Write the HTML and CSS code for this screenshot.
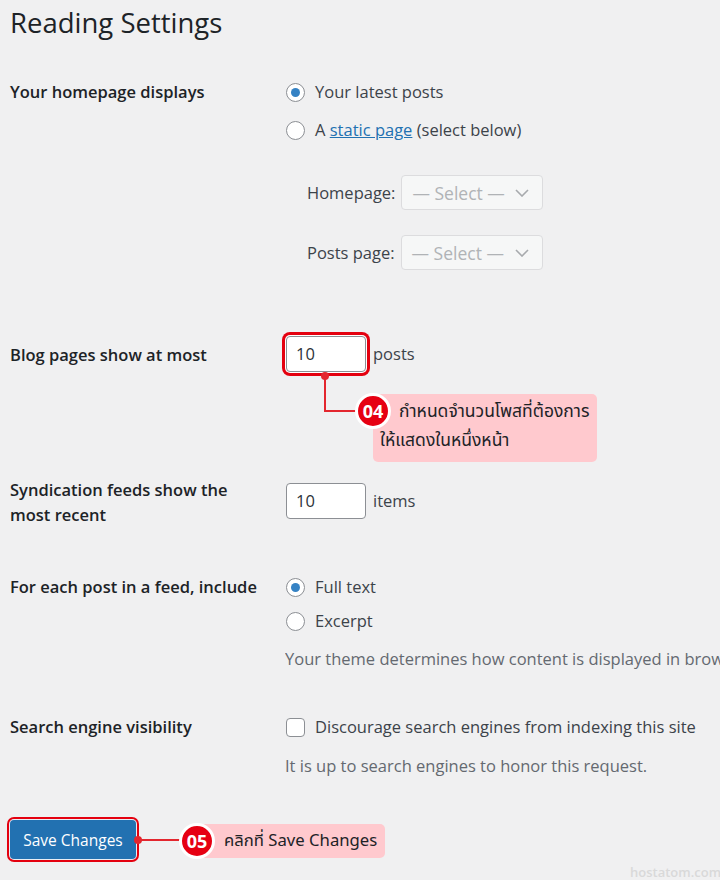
FILE: index.html
```html
<!DOCTYPE html>
<html lang="en">
<head>
<meta charset="utf-8">
<title>Reading Settings</title>
<link rel="stylesheet" href="styles.css">
</head>
<body>
<div class="page">
  <h1 class="title">Reading Settings</h1>

  <div class="row row-home">
    <div class="label">Your homepage displays</div>
    <div class="field">
      <div class="choice"><span class="radio checked"></span><span>Your latest posts</span></div>
      <div class="choice choice-2"><span class="radio"></span><span>A <a class="link" href="#">static page</a> (select below)</span></div>
      <div class="sub sub-1"><span>Homepage:</span><span class="select">— Select —<svg class="chev" viewBox="0 0 14 8" width="14" height="8"><path d="M1 1l6 6 6-6" fill="none" stroke="#a7aaad" stroke-width="1.6"/></svg></span></div>
      <div class="sub sub-2"><span>Posts page:</span><span class="select">— Select —<svg class="chev" viewBox="0 0 14 8" width="14" height="8"><path d="M1 1l6 6 6-6" fill="none" stroke="#a7aaad" stroke-width="1.6"/></svg></span></div>
    </div>
  </div>

  <div class="row row-blog">
    <div class="label label-pad">Blog pages show at most</div>
    <div class="field field-inline"><span class="num highlight">10</span><span class="unit">posts</span></div>
  </div>

  <div class="row row-feed">
    <div class="label label-two">Syndication feeds show the<br>most recent</div>
    <div class="field field-inline field-top"><span class="num">10</span><span class="unit">items</span></div>
  </div>

  <div class="row row-include">
    <div class="label">For each post in a feed, include</div>
    <div class="field field-clip">
      <div class="choice"><span class="radio checked"></span><span>Full text</span></div>
      <div class="choice choice-3"><span class="radio"></span><span>Excerpt</span></div>
      <p class="desc desc-1">Your theme determines how content is displayed in browsers.</p>
    </div>
  </div>

  <div class="row row-search">
    <div class="label">Search engine visibility</div>
    <div class="field">
      <div class="choice"><span class="checkbox"></span><span>Discourage search engines from indexing this site</span></div>
      <p class="desc desc-2">It is up to search engines to honor this request.</p>
    </div>
  </div>

  <div class="actions">
    <span class="button">Save Changes</span>
  </div>

  <!-- annotation 04 -->
  <span class="dot dot-04"></span>
  <span class="vline vline-04"></span>
  <span class="hline hline-04"></span>
  <div class="note note-04"><span class="note-line1">กำหนดจำนวนโพสที่ต้องการ</span><br>ให้แสดงในหนึ่งหน้า</div>
  <span class="badge badge-04">04</span>

  <!-- annotation 05 -->
  <span class="dot dot-05"></span>
  <span class="hline hline-05"></span>
  <div class="note note-05">คลิกที่ Save Changes</div>
  <span class="badge badge-05">05</span>

  <div class="watermark">hostatom.com</div>
</div>
</body>
</html>
```

FILE: styles.css
```css
html, body {
  margin: 0;
  padding: 0;
  background: #f0f0f1;
}
body {
  width: 720px;
  height: 880px;
  overflow: hidden;
  font-family: "Open Sans", "Noto Sans", sans-serif;
  font-size: 16.5px;
  color: #3c434a;
}
.page {
  position: relative;
  width: 720px;
  height: 880px;
  padding-left: 10px;
  box-sizing: border-box;
  overflow: hidden;
}
.title {
  margin: 0;
  padding-top: 5px;
  font-size: 27.5px;
  font-weight: 400;
  line-height: 36px;
  color: #1d2327;
}
.row {
  display: grid;
  grid-template-columns: 275px 1fr;
}
.row-home { margin-top: 39px; }
.row-blog { margin-top: 66px; }
.row-feed { margin-top: 105px; }
.row-include { margin-top: 48px; }
.row-search { margin-top: 44px; }

.label {
  font-weight: 600;
  color: #1d2327;
  line-height: 24px;
  font-size: 16.5px;
}
.label-pad { padding-top: 7px; }
.label-two { line-height: 25px; }

.field { line-height: 24px; min-width: 0; }
.field-clip { overflow: hidden; }
.choice {
  display: flex;
  align-items: center;
  gap: 10px;
  height: 24px;
  white-space: nowrap;
}
.choice-2 { margin-top: 14px; }
.choice-3 { margin-top: 10px; }
.radio {
  width: 17px;
  height: 17px;
  border: 1px solid #8c8f94;
  border-radius: 50%;
  background: #fff;
  margin-left: 1px;
  display: inline-flex;
  align-items: center;
  justify-content: center;
  flex: none;
}
.radio.checked::after {
  content: "";
  width: 9px;
  height: 9px;
  border-radius: 50%;
  background: #3582c4;
}
.checkbox {
  width: 17px;
  height: 17px;
  border: 1px solid #8c8f94;
  border-radius: 4px;
  background: #fff;
  margin-left: 1px;
  flex: none;
}
.link {
  color: #2271b1;
  text-decoration: underline;
}
.sub {
  display: flex;
  align-items: center;
  gap: 6px;
  padding-left: 22px;
  height: 35px;
}
.sub-1 { margin-top: 33px; }
.sub-2 { margin-top: 25px; }
.select {
  display: flex;
  align-items: center;
  justify-content: space-between;
  box-sizing: border-box;
  width: 142px;
  height: 35px;
  padding: 0 13px 0 10px;
  background: #f6f7f7;
  border: 1px solid #dcdcde;
  border-radius: 4px;
  color: #b0b3b6;
  font-size: 17.5px;
}
.chev { flex: none; }
.field-inline {
  display: flex;
  align-items: center;
  gap: 7px;
  padding-left: 1px;
}
.field-top {
  align-items: flex-start;
  padding-top: 6px;
}
.field-top .unit { line-height: 36px; }
.num {
  box-sizing: border-box;
  width: 80px;
  height: 36px;
  border: 1px solid #8c8f94;
  border-radius: 4px;
  background: #fff;
  padding-left: 9px;
  line-height: 34px;
  color: #2c3338;
}
.highlight {
  box-shadow: 0 0 0 1px #fff, 0 0 0 4px #e4000f;
  border-radius: 4px;
}
.desc {
  margin: 0;
  color: #646970;
  white-space: nowrap;
  line-height: 24px;
}
.desc-1 { margin-top: 14px; }
.desc-2 { margin-top: 15px; }

.actions { margin-top: 42px; }
.button {
  display: inline-flex;
  align-items: center;
  justify-content: center;
  box-sizing: border-box;
  width: 126px;
  height: 39px;
  background: #2271b1;
  color: #fff;
  border-radius: 4px;
  font-size: 15.5px;
  box-shadow: 0 0 0 1px #e8eef5, 0 0 0 3px #e4000f;
}

/* annotations */
.dot {
  position: absolute;
  width: 8px;
  height: 8px;
  border-radius: 50%;
  background: #e3262e;
}
.vline, .hline {
  position: absolute;
  background: #e3262e;
}
.dot-04 { left: 321px; top: 372px; }
.vline-04 { left: 324px; top: 376px; width: 2px; height: 36px; }
.hline-04 { left: 324px; top: 410px; width: 40px; height: 2px; }
.note {
  position: absolute;
  background: #ffc9ce;
  border-radius: 5px;
  color: #1d2327;
  font-family: "Noto Sans Thai", "Noto Sans", sans-serif;
  font-size: 17.5px;
  box-sizing: border-box;
}
.note-04 {
  left: 373px;
  top: 394px;
  width: 224px;
  height: 68px;
  padding: 3px 4px 0 7px;
  line-height: 29px;
  white-space: nowrap;
}
.note-line1 { margin-left: 19px; }
.badge {
  position: absolute;
  width: 36px;
  height: 36px;
  box-sizing: border-box;
  border: 3px solid #fff;
  border-radius: 50%;
  background: #e60012;
  color: #fff;
  font-weight: 700;
  font-size: 18px;
  display: flex;
  align-items: center;
  justify-content: center;
  font-family: "Open Sans", "Noto Sans", sans-serif;
}
.badge-04 { left: 355px; top: 393px; }
.dot-05 { left: 134px; top: 836px; }
.hline-05 { left: 138px; top: 839px; width: 44px; height: 2px; }
.note-05 {
  left: 197px;
  top: 824px;
  width: 188px;
  height: 34px;
  padding-left: 27px;
  line-height: 34px;
  white-space: nowrap;
  font-size: 16.7px;
}
.badge-05 { left: 179px; top: 823px; }

.watermark {
  position: absolute;
  left: 630px;
  top: 862px;
  font-family: "Open Sans", "Noto Sans", sans-serif;
  font-weight: 600;
  font-size: 13px;
  color: #d9d9d9;
  line-height: 20px;
}
```
